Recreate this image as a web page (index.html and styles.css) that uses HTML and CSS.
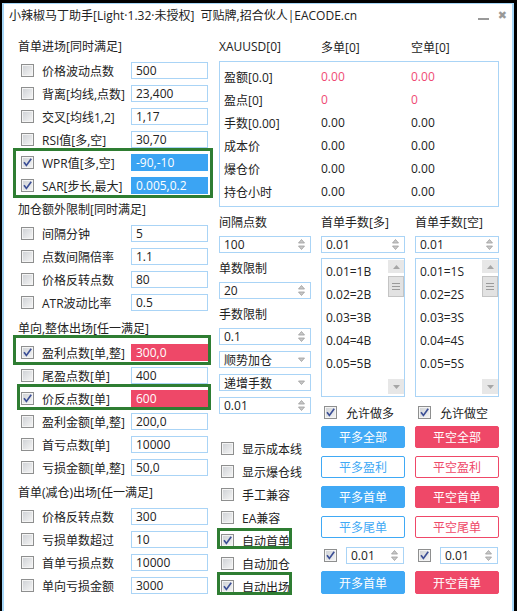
FILE: index.html
```html
<!DOCTYPE html>
<html lang="zh-CN">
<head>
    <meta charset="UTF-8">
    <title>小辣椒马丁助手</title>
    <link rel="stylesheet" href="styles.css">
</head>
<body>

<div class="window">
    <div class="titlebar">
        <span class="title">小辣椒马丁助手[Light·1.32·未授权]&nbsp; 可贴牌,招合伙人|EACODE.cn</span>
        <span class="win-btns"><span class="win-min"></span><span class="win-close">✖</span></span>
    </div>

    <div class="main">
        <!-- left: entry / exit rules -->
        <div class="left">
            <div class="sec">首单进场[同时满足]</div>
            <div class="row"><span class="cb"></span><span>价格波动点数</span><span class="inp">500</span></div>
            <div class="row"><span class="cb"></span><span>背离[均线,点数]</span><span class="inp">23,400</span></div>
            <div class="row"><span class="cb"></span><span>交叉[均线1,2]</span><span class="inp">1,17</span></div>
            <div class="row"><span class="cb"></span><span>RSI值[多,空]</span><span class="inp">30,70</span></div>
            <div class="hl hl-wpr">
                <div class="row"><span class="cb on"><svg viewBox="0 0 11 11" width="11" height="11"><path d="M2 5.2L4.4 8.4L9.2 1.8" fill="none" stroke="#3c4f96" stroke-width="1.7"/></svg></span><span>WPR值[多,空]</span><span class="inp blue">-90,-10</span></div>
                <div class="row"><span class="cb on"><svg viewBox="0 0 11 11" width="11" height="11"><path d="M2 5.2L4.4 8.4L9.2 1.8" fill="none" stroke="#3c4f96" stroke-width="1.7"/></svg></span><span>SAR[步长,最大]</span><span class="inp blue">0.005,0.2</span></div>
            </div>

            <div class="sec">加仓额外限制[同时满足]</div>
            <div class="row"><span class="cb"></span><span>间隔分钟</span><span class="inp">5</span></div>
            <div class="row"><span class="cb"></span><span>点数间隔倍率</span><span class="inp">1.1</span></div>
            <div class="row"><span class="cb"></span><span>价格反转点数</span><span class="inp">80</span></div>
            <div class="row"><span class="cb"></span><span>ATR波动比率</span><span class="inp">0.5</span></div>

            <div class="sec s3">单向,整体出场[任一满足]</div>
            <div class="hl hl-win">
                <div class="row"><span class="cb on"><svg viewBox="0 0 11 11" width="11" height="11"><path d="M2 5.2L4.4 8.4L9.2 1.8" fill="none" stroke="#3c4f96" stroke-width="1.7"/></svg></span><span>盈利点数[单,整]</span><span class="inp red">300,0</span></div>
            </div>
            <div class="row"><span class="cb"></span><span>尾盈点数[单]</span><span class="inp">400</span></div>
            <div class="hl hl-rev">
                <div class="row"><span class="cb on"><svg viewBox="0 0 11 11" width="11" height="11"><path d="M2 5.2L4.4 8.4L9.2 1.8" fill="none" stroke="#3c4f96" stroke-width="1.7"/></svg></span><span>价反点数[单]</span><span class="inp red">600</span></div>
            </div>
            <div class="row"><span class="cb"></span><span>盈利金额[单,整]</span><span class="inp">200,0</span></div>
            <div class="row"><span class="cb"></span><span>首亏点数[单]</span><span class="inp">10000</span></div>
            <div class="row"><span class="cb"></span><span>亏损金额[单,整]</span><span class="inp">50,0</span></div>

            <div class="sec s4">首单(减仓)出场[任一满足]</div>
            <div class="row"><span class="cb"></span><span>价格反转点数</span><span class="inp">300</span></div>
            <div class="row"><span class="cb"></span><span>亏损单数超过</span><span class="inp">10</span></div>
            <div class="row"><span class="cb"></span><span>首单亏损点数</span><span class="inp">10000</span></div>
            <div class="row"><span class="cb"></span><span>单向亏损金额</span><span class="inp">3000</span></div>
        </div>

        <!-- right: position info and controls -->
        <div class="right">
            <div class="head"><span>XAUUSD[0]</span><span>多单[0]</span><span>空单[0]</span></div>
            <div class="info">
                <span>盈额[0.0]</span><span class="neg">0.00</span><span class="neg">0.00</span>
                <span>盈点[0]</span><span class="neg">0</span><span class="neg">0</span>
                <span>手数[0.00]</span><span>0.00</span><span>0.00</span>
                <span>成本价</span><span>0.00</span><span>0.00</span>
                <span>爆仓价</span><span>0.00</span><span>0.00</span>
                <span>持仓小时</span><span>0.00</span><span>0.00</span>
            </div>

            <div class="ctrl">
                <div class="col col-a">
                    <div class="line">间隔点数</div>
                    <div class="line"><div class="spin"><span>100</span><svg class="arr" width="7" height="13" viewBox="0 0 7 13"><path d="M0.5 5L3.5 1.5L6.5 5Z M0.5 8L3.5 11.5L6.5 8Z" fill="#c9c9c9" stroke="#9c9c9c" stroke-width="0.8"/></svg></div></div>
                    <div class="line">单数限制</div>
                    <div class="line"><div class="spin"><span>20</span><svg class="arr" width="7" height="13" viewBox="0 0 7 13"><path d="M0.5 5L3.5 1.5L6.5 5Z M0.5 8L3.5 11.5L6.5 8Z" fill="#c9c9c9" stroke="#9c9c9c" stroke-width="0.8"/></svg></div></div>
                    <div class="line">手数限制</div>
                    <div class="line"><div class="spin"><span>0.1</span><svg class="arr" width="7" height="13" viewBox="0 0 7 13"><path d="M0.5 5L3.5 1.5L6.5 5Z M0.5 8L3.5 11.5L6.5 8Z" fill="#c9c9c9" stroke="#9c9c9c" stroke-width="0.8"/></svg></div></div>
                    <div class="line"><div class="spin"><span>顺势加仓</span><svg class="arr" width="7" height="13" viewBox="0 0 7 13"><path d="M0.5 5L3.5 8.5L6.5 5Z" fill="#c9c9c9" stroke="#9c9c9c" stroke-width="0.8"/></svg></div></div>
                    <div class="line"><div class="spin"><span>递增手数</span><svg class="arr" width="7" height="13" viewBox="0 0 7 13"><path d="M0.5 5L3.5 8.5L6.5 5Z" fill="#c9c9c9" stroke="#9c9c9c" stroke-width="0.8"/></svg></div></div>
                    <div class="line"><div class="spin"><span>0.01</span><svg class="arr" width="7" height="13" viewBox="0 0 7 13"><path d="M0.5 5L3.5 1.5L6.5 5Z M0.5 8L3.5 11.5L6.5 8Z" fill="#c9c9c9" stroke="#9c9c9c" stroke-width="0.8"/></svg></div></div>
                    <div class="spacer"></div>
                    <div class="line"><span class="cb"></span>显示成本线</div>
                    <div class="line"><span class="cb"></span>显示爆仓线</div>
                    <div class="line"><span class="cb"></span>手工兼容</div>
                    <div class="line"><span class="cb"></span>EA兼容</div>
                    <div class="line hl hl-r1"><span class="cb on"><svg viewBox="0 0 11 11" width="11" height="11"><path d="M2 5.2L4.4 8.4L9.2 1.8" fill="none" stroke="#3c4f96" stroke-width="1.7"/></svg></span>自动首单</div>
                    <div class="line"><span class="cb"></span>自动加仓</div>
                    <div class="line hl hl-r2"><span class="cb on"><svg viewBox="0 0 11 11" width="11" height="11"><path d="M2 5.2L4.4 8.4L9.2 1.8" fill="none" stroke="#3c4f96" stroke-width="1.7"/></svg></span>自动出场</div>
                </div>

                <div class="col col-b">
                    <div class="line">首单手数[多]</div>
                    <div class="line"><div class="spin"><span>0.01</span><svg class="arr" width="7" height="13" viewBox="0 0 7 13"><path d="M0.5 5L3.5 1.5L6.5 5Z M0.5 8L3.5 11.5L6.5 8Z" fill="#c9c9c9" stroke="#9c9c9c" stroke-width="0.8"/></svg></div></div>
                    <div class="lst">
                        <div class="items">
                            <div>0.01=1B</div><div>0.02=2B</div><div>0.03=3B</div><div>0.04=4B</div><div>0.05=5B</div>
                        </div>
                        <div class="sb">
                            <div class="sb-btn up"><svg width="7" height="4" viewBox="0 0 7 4"><path d="M0 4L3.5 0L7 4Z" fill="#a6a6a6"/></svg></div>
                            <div class="thumb"><i></i><i></i><i></i></div>
                            <div class="sb-gap"></div>
                            <div class="sb-btn dn"><svg width="7" height="4" viewBox="0 0 7 4"><path d="M0 0L3.5 4L7 0Z" fill="#a6a6a6"/></svg></div>
                        </div>
                    </div>
                    <div class="chk-line"><span class="cb on"><svg viewBox="0 0 11 11" width="11" height="11"><path d="M2 5.2L4.4 8.4L9.2 1.8" fill="none" stroke="#3c4f96" stroke-width="1.7"/></svg></span>允许做多</div>
                    <div class="btn first">平多全部</div>
                    <div class="btn out">平多盈利</div>
                    <div class="btn">平多首单</div>
                    <div class="btn out">平多尾单</div>
                    <div class="spin-line"><span class="cb on"><svg viewBox="0 0 11 11" width="11" height="11"><path d="M2 5.2L4.4 8.4L9.2 1.8" fill="none" stroke="#3c4f96" stroke-width="1.7"/></svg></span><div class="spin"><span>0.01</span><svg class="arr" width="7" height="13" viewBox="0 0 7 13"><path d="M0.5 5L3.5 1.5L6.5 5Z M0.5 8L3.5 11.5L6.5 8Z" fill="#c9c9c9" stroke="#9c9c9c" stroke-width="0.8"/></svg></div></div>
                    <div class="btn last">开多首单</div>
                </div>

                <div class="col col-c">
                    <div class="line">首单手数[空]</div>
                    <div class="line"><div class="spin"><span>0.01</span><svg class="arr" width="7" height="13" viewBox="0 0 7 13"><path d="M0.5 5L3.5 1.5L6.5 5Z M0.5 8L3.5 11.5L6.5 8Z" fill="#c9c9c9" stroke="#9c9c9c" stroke-width="0.8"/></svg></div></div>
                    <div class="lst">
                        <div class="items">
                            <div>0.01=1S</div><div>0.02=2S</div><div>0.03=3S</div><div>0.04=4S</div><div>0.05=5S</div>
                        </div>
                        <div class="sb">
                            <div class="sb-btn up"><svg width="7" height="4" viewBox="0 0 7 4"><path d="M0 4L3.5 0L7 4Z" fill="#a6a6a6"/></svg></div>
                            <div class="thumb"><i></i><i></i><i></i></div>
                            <div class="sb-gap"></div>
                            <div class="sb-btn dn"><svg width="7" height="4" viewBox="0 0 7 4"><path d="M0 0L3.5 4L7 0Z" fill="#a6a6a6"/></svg></div>
                        </div>
                    </div>
                    <div class="chk-line"><span class="cb on"><svg viewBox="0 0 11 11" width="11" height="11"><path d="M2 5.2L4.4 8.4L9.2 1.8" fill="none" stroke="#3c4f96" stroke-width="1.7"/></svg></span>允许做空</div>
                    <div class="btn r first">平空全部</div>
                    <div class="btn r out">平空盈利</div>
                    <div class="btn r">平空首单</div>
                    <div class="btn r out">平空尾单</div>
                    <div class="spin-line"><span class="cb on"><svg viewBox="0 0 11 11" width="11" height="11"><path d="M2 5.2L4.4 8.4L9.2 1.8" fill="none" stroke="#3c4f96" stroke-width="1.7"/></svg></span><div class="spin"><span>0.01</span><svg class="arr" width="7" height="13" viewBox="0 0 7 13"><path d="M0.5 5L3.5 1.5L6.5 5Z M0.5 8L3.5 11.5L6.5 8Z" fill="#c9c9c9" stroke="#9c9c9c" stroke-width="0.8"/></svg></div></div>
                    <div class="btn r last">开空首单</div>
                </div>
            </div>
        </div>
    </div>
</div>

</body>
</html>
```

FILE: styles.css
```css
* {
    box-sizing: border-box;
}

body {
    margin: 0;
    background-color: #000;
    font-family: "Open Sans", "Noto Sans CJK SC", sans-serif;
    font-size: 12px;
    color: #222;
}

.window {
    margin: 3px 0 0 2px;
    width: 512px;
    height: 620px;
    background-color: #fff;
    border: 2px solid #a6d6f6;
    border-top-width: 1px;
}

/* title bar: text, minimise, close */
.titlebar {
    display: flex;
    justify-content: space-between;
    align-items: flex-start;
    height: 30px;
    padding: 4px 5px 0 5px;
}

.title {
    line-height: 16px;
    white-space: nowrap;
}

.win-btns {
    display: flex;
    align-items: flex-start;
    gap: 9px;
}

.win-min {
    width: 11px;
    height: 2px;
    margin-top: 10px;
    background-color: #999;
}

.win-close {
    margin-top: 2px;
    font-family: "DejaVu Sans", sans-serif;
    font-size: 11px;
    line-height: 12px;
    color: #999;
}

.main {
    display: flex;
    gap: 11px;
    padding-left: 14px;
}

/* left column */
.left {
    width: 190px;
}

.sec {
    height: 25px;
    line-height: 25px;
}

.sec.s3 {
    margin-top: 2px;
}

.sec.s4 {
    margin-top: 1px;
}

.row {
    height: 23px;
    display: flex;
    align-items: center;
    white-space: nowrap;
}

.row .cb {
    margin: 0 8px 0 3px;
}

.inp {
    margin-left: auto;
    width: 77px;
    height: 17px;
    line-height: 15px;
    padding-left: 4px;
    border: 1px solid #aad4f6;
    flex-shrink: 0;
}

.inp.blue {
    background-color: #3ba4f3;
    border-color: #3ba4f3;
    color: #fff;
}

.inp.red {
    background-color: #ee4868;
    border-color: #ee4868;
    color: #fff;
}

/* checkbox */
.cb {
    width: 13px;
    height: 13px;
    flex-shrink: 0;
    border: 1px solid #8e8f8f;
    background: linear-gradient(135deg, #cdd0d4, #f6f6f6);
    box-shadow: inset 0 0 0 1px #f4f4f4;
    display: inline-flex;
}

.cb svg {
    display: block;
}

/* green highlight frames */
.hl {
    position: relative;
}

.hl::after {
    content: "";
    position: absolute;
    border: 3px solid #2e7d32;
    pointer-events: none;
}

.hl-wpr::after {
    top: -3px;
    bottom: -1px;
    left: -5px;
    right: -5px;
}

.hl-win::after {
    top: -6px;
    bottom: -1px;
    left: -5px;
    right: -3px;
}

.hl-rev::after {
    top: -3px;
    bottom: 0;
    left: -1px;
    right: -3px;
}

.hl-r1::after {
    top: -1px;
    bottom: 3px;
    left: -2px;
    right: 19px;
}

.hl-r2::after {
    top: -3px;
    bottom: 3px;
    left: -2px;
    right: 19px;
}

/* right side */
.right {
    width: 280px;
}

.head {
    height: 25px;
    display: grid;
    grid-template-columns: 102px 90px 1fr;
    align-items: center;
}

.info {
    margin-top: 2px;
    border: 1px solid #aad4f6;
    padding: 3px 0 3px 4px;
    display: grid;
    grid-template-columns: 97px 90px 1fr;
    grid-auto-rows: 23px;
    align-items: center;
}

.neg {
    color: #ef4a74;
}

.ctrl {
    margin-top: 3px;
    display: grid;
    grid-template-columns: 92px 84px 84px;
    column-gap: 10px;
    align-items: start;
}

.col {
    display: flex;
    flex-direction: column;
}

.line {
    height: 23px;
    display: flex;
    align-items: center;
    white-space: nowrap;
}

.col-a .line .cb {
    margin: 0 8px 0 2px;
}

.spacer {
    height: 20px;
}

.spin {
    width: 100%;
    height: 17px;
    border: 1px solid #aad4f6;
    display: flex;
    align-items: center;
    justify-content: space-between;
    padding: 0 5px 0 4px;
    background-color: #fff;
}

.arr {
    display: block;
}

/* list boxes */
.lst {
    margin-top: 2px;
    height: 139px;
    border: 1px solid #aad4f6;
    display: flex;
}

.items {
    flex: 1;
    padding: 1px 0 0 4px;
}

.items div {
    height: 23px;
    line-height: 23px;
}

.sb {
    width: 16px;
    display: flex;
    flex-direction: column;
    padding: 1px 0 2px;
}

.sb-btn {
    background-color: #e7e7e7;
    display: flex;
    align-items: center;
    justify-content: center;
}

.sb-btn.up {
    height: 13px;
}

.sb-btn.dn {
    height: 15px;
}

.thumb {
    margin-top: 3px;
    height: 21px;
    background-color: #e2e2e2;
    border: 1px solid #c4c4c4;
    display: flex;
    flex-direction: column;
    align-items: center;
    justify-content: center;
    gap: 2px;
}

.thumb i {
    display: block;
    width: 8px;
    height: 1px;
    background-color: #9a9a9a;
}

.sb-gap {
    flex: 1;
}

.chk-line {
    margin-top: 4px;
    height: 23px;
    display: flex;
    align-items: center;
}

.chk-line .cb,
.spin-line .cb {
    margin: 0 9px 0 3px;
}

/* buttons */
.btn {
    margin-top: 8px;
    height: 22px;
    border-radius: 2px;
    display: flex;
    align-items: center;
    justify-content: center;
    background-color: #40a9f5;
    border: 1px solid #40a9f5;
    color: #fff;
}

.btn.first {
    margin-top: 2px;
}

.btn.last {
    margin-top: 7px;
    height: 23px;
}

.btn.out {
    background-color: #fff;
    color: #40a9f5;
}

.btn.r {
    background-color: #ef4868;
    border-color: #ef4868;
}

.btn.r.out {
    background-color: #fff;
    color: #ef4868;
}

.spin-line {
    margin-top: 9px;
    height: 17px;
    display: flex;
    align-items: center;
}

.spin-line .spin {
    width: 58px;
    flex-shrink: 0;
}
```
